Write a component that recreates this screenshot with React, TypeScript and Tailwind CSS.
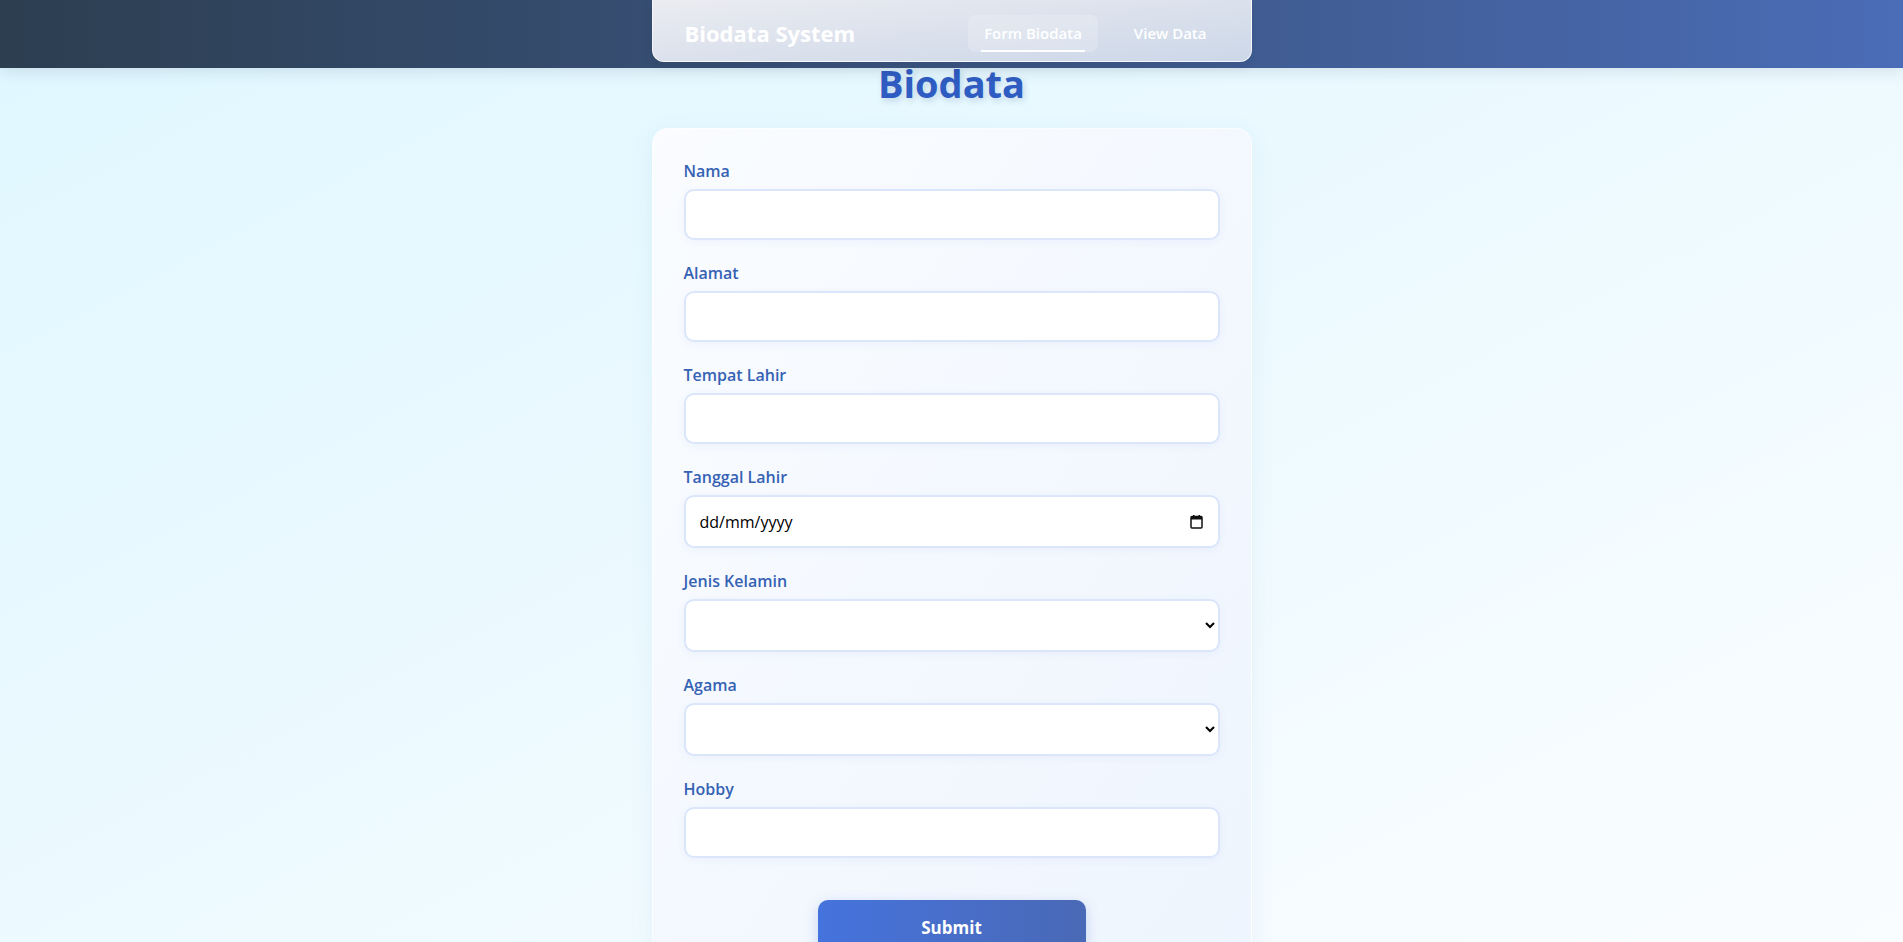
import { useState } from 'react'

const inputCls =
  'block w-full rounded-[10px] border-2 border-[#dbe6fb] bg-white px-3 text-base text-black shadow-[0_2px_8px_rgba(66,110,200,0.06)] outline-none'

function Field({ label, children }: { label: string; children: React.ReactNode }) {
  return (
    <div className="mb-[23px]">
      <label className="mb-2 block text-[16px] font-semibold leading-5 text-[#3662b4]">{label}</label>
      {children}
    </div>
  )
}

function CalendarIcon() {
  return (
    <svg width="13" height="14" viewBox="0 0 13 14" className="pointer-events-none absolute right-[17px] top-1/2 -translate-y-1/2">
      <rect x="1" y="1.5" width="11" height="11.5" rx="1" fill="none" stroke="#111" strokeWidth="1.5" />
      <rect x="1" y="1.5" width="11" height="3" fill="#111" />
      <rect x="3" y="0" width="1.5" height="2.5" fill="#111" />
      <rect x="8.5" y="0" width="1.5" height="2.5" fill="#111" />
    </svg>
  )
}

export default function App() {
  const [form, setForm] = useState({
    nama: '',
    alamat: '',
    tempat: '',
    tanggal: '',
    jk: '',
    agama: '',
    hobby: '',
  })

  const set = (k: keyof typeof form) => (e: React.ChangeEvent<HTMLInputElement | HTMLSelectElement>) =>
    setForm({ ...form, [k]: e.target.value })

  return (
    <div className="min-h-screen bg-gradient-to-br from-[#dff7ff] to-[#fbfdff] font-['Open_Sans',sans-serif]">
      {/* Header */}
      <header className="relative z-10 h-[68px] w-full bg-gradient-to-r from-[#2c3e50] to-[#4b6cb7] shadow-[0_4px_14px_rgba(30,60,100,0.12)]">
        <nav className="mx-auto flex h-[62px] w-[600px] items-center justify-between rounded-b-xl border border-t-0 border-white/70 bg-gradient-to-br from-[#ebecf1] to-[#ccd7e8] pl-8 pr-[28px] pt-[5px] shadow-[0_4px_12px_rgba(0,0,0,0.08)]">
          <span className="text-[22px] font-bold text-white">Biodata System</span>
          <div className="flex items-center gap-5">
            <a className="relative rounded-lg bg-white/20 px-4 py-2 text-[15px] font-semibold leading-[21px] text-white">
              Form Biodata
              <span className="absolute bottom-0 left-[10%] h-0.5 w-[80%] bg-white" />
            </a>
            <a className="px-4 py-2 text-[15px] font-semibold leading-[21px] text-white">View Data</a>
          </div>
        </nav>
      </header>

      <main className="flex flex-col items-center">
        <h1 className="-mt-[5px] text-[38px] font-bold leading-10 text-[#2f5cc2] [text-shadow:2px_3px_6px_rgba(30,60,120,0.18)]">
          Biodata
        </h1>

        <form
          className="mt-[25px] w-[600px] rounded-2xl border border-white/80 bg-gradient-to-br from-[#fafcff] to-[#eef5fe] px-[31px] py-8 shadow-[0_6px_24px_rgba(70,110,180,0.08)]"
          onSubmit={(e) => e.preventDefault()}
        >
          <Field label="Nama">
            <input type="text" className={`${inputCls} h-[51px]`} value={form.nama} onChange={set('nama')} />
          </Field>
          <Field label="Alamat">
            <input type="text" className={`${inputCls} h-[51px]`} value={form.alamat} onChange={set('alamat')} />
          </Field>
          <Field label="Tempat Lahir">
            <input type="text" className={`${inputCls} h-[51px]`} value={form.tempat} onChange={set('tempat')} />
          </Field>
          <Field label="Tanggal Lahir">
            <div className="relative">
              <input
                type="text"
                placeholder="dd/mm/yyyy"
                className={`${inputCls} h-[53px] pl-[14px] placeholder:text-black`}
                value={form.tanggal}
                onChange={set('tanggal')}
              />
              <CalendarIcon />
            </div>
          </Field>
          <Field label="Jenis Kelamin">
            <select className={`${inputCls} h-[53px]`} value={form.jk} onChange={set('jk')}>
              <option value=""></option>
              <option value="L">Laki-laki</option>
              <option value="P">Perempuan</option>
            </select>
          </Field>
          <Field label="Agama">
            <select className={`${inputCls} h-[53px]`} value={form.agama} onChange={set('agama')}>
              <option value=""></option>
              <option>Islam</option>
              <option>Kristen</option>
              <option>Katolik</option>
              <option>Hindu</option>
              <option>Buddha</option>
              <option>Konghucu</option>
            </select>
          </Field>
          <Field label="Hobby">
            <input type="text" className={`${inputCls} h-[51px]`} value={form.hobby} onChange={set('hobby')} />
          </Field>

          <button
            type="submit"
            className="mx-auto mt-[42px] block w-1/2 rounded-[10px] bg-gradient-to-r from-[#4573dd] to-[#4a69b6] py-3.5 text-[17px] font-bold leading-7 text-white shadow-[0_4px_14px_rgba(70,110,200,0.25)]"
          >
            Submit
          </button>
        </form>
      </main>
    </div>
  )
}
